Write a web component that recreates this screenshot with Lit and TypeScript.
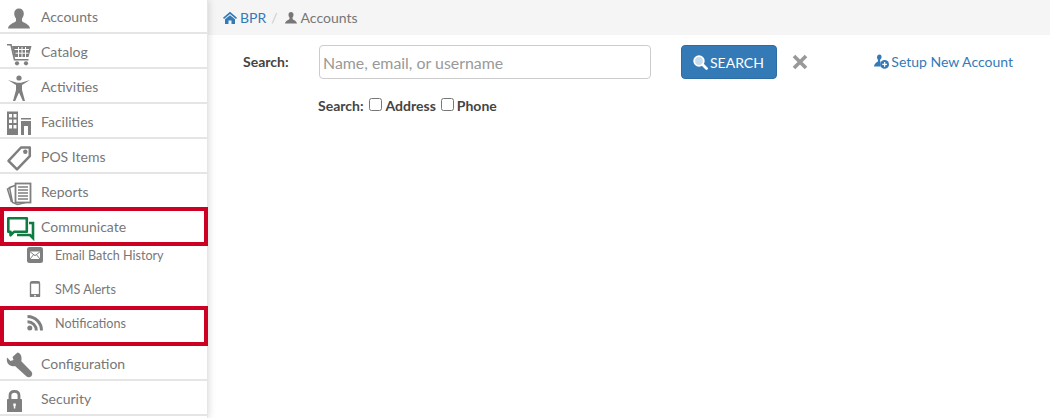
import { LitElement, html, css, svg } from "lit";
import { customElement } from "lit/decorators.js";

const G = "#7f7f7f";
const icons: Record<string, unknown> = {
  accounts: svg`<path fill="${G}" d="M15 7.500c-3 0-4.800 2-4.800 5 0 2 .8 3.700 1.800 5V20c-.5 1.700-7.500 2.500-8 7.500h22c-.5-5-7.500-5.800-8-7.500v-2.500c1-1.300 1.800-3 1.800-5 0-3-1.800-5-4.800-5z"/>`,
  catalog: svg`<path fill="none" stroke="${G}" stroke-width="1.600" d="M3 8.800h4l3.500 15h14"/><path fill="${G}" d="M8 10h19.500l-3 11H10.500z"/><path stroke="#fff" fill="none" d="M10.500 13.500h14.500M11.500 17.200h13M14.500 11v10M18 11v10M21.500 11v10"/><circle cx="13" cy="27.300" r="2.100" fill="${G}"/><circle cx="22" cy="27.300" r="2.100" fill="${G}"/>`,
  activities: svg`<circle cx="15" cy="7" r="2.600" fill="${G}"/><path fill="${G}" d="M4 9l9 2.800h4L26 9l-8 5v5l3 11h-2.200L15 21.500 11.200 30H9l3-11v-5z"/>`,
  facilities: svg`<path fill="${G}" fill-rule="evenodd" d="M3 5.500h11V29H3zM5 8v3.500h3V8zM9.500 8v3.500h3V8zM5 13.500V17h3v-3.500zM9.500 13.500V17h3v-3.500zM5 19v3.500h3V19zM9.500 19v3.500h3V19zM17 12h10v1.500H17zM17 15h10v14h-3v-9h-4v9h-3z"/>`,
  pos: svg`<path fill="none" stroke="${G}" stroke-width="2.500" stroke-linejoin="round" d="M17 6.500h8.800v8.600L13 28.300 4.500 19.800z"/><circle cx="21.300" cy="10.700" r="2.200" fill="${G}"/>`,
  reports: svg`<path fill="none" stroke="${G}" stroke-width="1.500" d="M11 9.500 5.500 11.500l3 15 5 2 8-2M8 10.500 3.500 13l4 13"/><rect x="11.500" y="7.500" width="15" height="19" fill="#fff" stroke="${G}" stroke-width="1.800"/><path stroke="${G}" stroke-width="1.500" d="M14 11h10M14 14h10M14 17h10M14 20h10M14 23h10"/>`,
  comm: svg`<path fill="none" stroke="#0e7c42" stroke-width="2.600" stroke-linejoin="round" d="M4.300 7.300h18.500v13.500H10l-3.500 3.500v-3.500H4.300z"/><path fill="none" stroke="#0e7c42" stroke-width="2.600" d="M25 12h4v12.500 2.500l-3-3H13"/>`,
  email: svg`<rect x="0" y="0" width="16" height="16" rx="2.500" fill="${G}"/><path fill="#fff" d="M3 4.500h10v7.500H3z"/><path fill="none" stroke="${G}" d="M3 4.700l5 4 5-4M3 12l3.700-4.500M13 12L9.300 7.500"/>`,
  sms: svg`<rect x="3.500" y=".7" width="9" height="15.600" rx="1.500" fill="#fff" stroke="${G}" stroke-width="1.400"/><rect x="3.500" y=".7" width="9" height="2" fill="${G}"/><rect x="3.500" y="13" width="9" height="3.300" fill="${G}"/><circle cx="8" cy="14.700" r=".9" fill="#fff"/>`,
  rss: svg`<circle cx="2.800" cy="13" r="2.500" fill="${G}"/><path fill="none" stroke="${G}" stroke-width="3" d="M.5 6.700a8.800 8.800 0 0 1 8.800 8.800M.5 1.500a14 14 0 0 1 14 14"/>`,
  config: svg`<path fill="${G}" d="M13.500 4.500 8.500 9l1 3-3 1-3.500-3.500c-1.200 5.500 2.800 9.800 8 8.500l11.300 10.300c1.500 1.400 3.700 1.300 5 0 1.300-1.400 1.300-3.500-.2-5L17.300 13.300C18.500 8 16 4.500 13.500 4.500z"/>`,
  security: svg`<path fill="none" stroke="${G}" stroke-width="2.800" d="M6 17v-4.500C6 9.800 7.800 8.400 10.500 8.400S15 9.800 15 12.500V17"/><path fill="${G}" fill-rule="evenodd" d="M4 16h13c.6 0 1 .4 1 1v12H3V17c0-.6.4-1 1-1zM9.300 20.500v2l.5 1v2h1.500v-2l.5-1v-2z"/>`,
};

type Item = { key: string; label: string };
const top: Item[] = [
  { key: "accounts", label: "Accounts" },
  { key: "catalog", label: "Catalog" },
  { key: "activities", label: "Activities" },
  { key: "facilities", label: "Facilities" },
  { key: "pos", label: "POS Items" },
  { key: "reports", label: "Reports" },
];
const subs: Item[] = [
  { key: "email", label: "Email Batch History" },
  { key: "sms", label: "SMS Alerts" },
  { key: "rss", label: "Notifications" },
];
const bottom: Item[] = [
  { key: "config", label: "Configuration" },
  { key: "security", label: "Security" },
];

@customElement("app-root")
export class AppRoot extends LitElement {
  static styles = css`
    :host {
      display: block;
      height: 418px;
      overflow: hidden;
      font-family: Lato, "Open Sans", sans-serif;
      font-size: 14px;
      color: #333;
      background: #fff;
    }
    .page { display: flex; height: 418px; }
    .side {
      position: relative;
      flex: 0 0 207px;
      height: 418px;
      background: #fff;
      border-right: 1px solid #e6e6e6;
      box-shadow: 1px 0 7px rgba(0, 0, 0, 0.14);
      z-index: 1;
    }
    .nav { margin-top: -1px; }
    .row {
      display: flex;
      align-items: center;
      box-sizing: border-box;
      height: 35px;
      padding: 2px 0 0 4px;
      gap: 5px;
      border-bottom: 2px solid #e5e5e5;
      color: #777;
      font-size: 14px;
    }
    .row.head { border-bottom: 0; height: 29px; padding-top: 6px; }
    .row svg { flex: none; width: 32px; height: 32px; }
    .subs { padding-bottom: 6px; }
    .sub {
      display: flex;
      align-items: center;
      height: 34px;
      padding-left: 27px;
      gap: 12px;
      color: #777;
      font-size: 12.600px;
    }
    .sub svg { flex: none; width: 16px; height: 16px; }
    .mark {
      position: absolute;
      left: 0;
      width: 208px;
      box-sizing: border-box;
      border: 4px solid #cc0022;
      pointer-events: none;
    }
    .mark.a { top: 207px; height: 39px; }
    .mark.b { top: 306px; height: 40px; }
    .main { flex: 1; min-width: 0; }
    .crumbs {
      display: flex;
      align-items: center;
      box-sizing: border-box;
      height: 35px;
      padding-left: 15px;
      background: #f5f5f5;
      color: #777;
      font-size: 14px;
    }
    .crumbs svg { width: 14px; height: 14px; flex: none; }
    .crumbs .bpr { color: #337ab7; margin-left: 3px; padding-bottom: 1px; }
    .crumbs .sep { color: #ccc; margin: 0 6px 0 5px; padding-bottom: 1px; }
    .crumbs .cur { margin-left: 3px; padding-bottom: 1px; }
    .form { padding: 10px 37px 0 35px; }
    .line { display: flex; align-items: center; height: 34px; }
    .lbl { width: 76px; font-weight: 700; color: #444; padding-bottom: 2px; font-size: 14px; }
    .input {
      box-sizing: border-box;
      width: 332px;
      height: 34px;
      padding: 0 3px;
      font: 15.900px Lato, sans-serif;
      border: 1px solid #ccc;
      border-radius: 4px;
      color: #333;
      outline: none;
    }
    .input::placeholder { color: #999; opacity: 1; }
    .btn {
      display: flex;
      align-items: center;
      gap: 2px;
      box-sizing: border-box;
      width: 96px;
      height: 34px;
      margin-left: 30px;
      padding: 0 0 0 11px;
      background: #337ab7;
      border: 1px solid #2e6da4;
      border-radius: 4px;
      color: #fff;
      font: 14px Lato, sans-serif;
    }
    .btn svg { width: 15px; height: 15px; flex: none; }
    .clear { width: 16px; height: 16px; margin-left: 15px; flex: none; }
    .link {
      display: flex;
      align-items: center;
      gap: 2px;
      margin-left: auto;
      color: #337ab7;
      font-size: 14px;
      padding-bottom: 2px;
    }
    .link svg { width: 15px; height: 15px; flex: none; }
    .opts {
      display: flex;
      align-items: center;
      margin: 16px 0 0 75px;
      font-weight: 700;
      color: #444;
      font-size: 14px;
      height: 20px;
    }
    .opts label { display: flex; align-items: center; }
    .opts input { width: 13px; height: 13px; margin: 0 3px 2px 5px; }
    .opts label:first-of-type input { margin-right: 4px; }
  `;

  private row(i: Item, cls = "") {
    return html`<div class="row ${cls}"><svg viewBox="0 0 32 32">${icons[i.key]}</svg><span>${i.label}</span></div>`;
  }

  render() {
    return html`<div class="page">
      <aside class="side">
        <nav class="nav">
          ${top.map((i) => this.row(i))}
          ${this.row({ key: "comm", label: "Communicate" }, "head")}
          <div class="subs">
            ${subs.map(
              (i) => html`<div class="sub"><svg viewBox="0 0 16 16">${icons[i.key]}</svg><span>${i.label}</span></div>`
            )}
          </div>
          ${bottom.map((i) => this.row(i))}
        </nav>
        <div class="mark a"></div>
        <div class="mark b"></div>
      </aside>
      <main class="main">
        <div class="crumbs">
          <svg viewBox="0 0 14 14"><path fill="#337ab7" d="M7 .8 0 6.800l1 1.100L7 3l6 4.900 1-1.100zM2 8.200 7 4.200l5 4V13H8.500V9.500h-3V13H2z"/></svg>
          <span class="bpr">BPR</span><span class="sep">/</span>
          <svg viewBox="0 0 14 14"><path fill="#777" d="M7 1C5.500 1 4.500 2 4.500 3.800c0 1.200.5 2.200 1 2.800V8C5 9 1.500 9.500 1 12.500h12C12.500 9.500 9 9 8.500 8V6.600c.5-.6 1-1.600 1-2.800C9.500 2 8.500 1 7 1z"/></svg>
          <span class="cur">Accounts</span>
        </div>
        <div class="form">
          <div class="line">
            <span class="lbl">Search:</span>
            <input class="input" placeholder="Name, email, or username" />
            <button class="btn">
              <svg viewBox="0 0 15 15"><circle cx="6" cy="6" r="4.800" fill="#c9dcec" stroke="#fff" stroke-width="1.800"/><path stroke="#fff" stroke-width="2.800" stroke-linecap="round" d="M9.800 9.800l3.700 3.700"/></svg>
              SEARCH
            </button>
            <svg class="clear" viewBox="0 0 16 16"><path stroke="#999" stroke-width="3.600" d="M2 2l12 12M14 2 2 14"/></svg>
            <span class="link">
              <svg viewBox="0 0 15 15"><path fill="#337ab7" d="M5.500 .5C4 .5 3 1.600 3 3.300c0 1.100.5 2 1 2.600v1.400C3.500 8.300.5 8.700 0 12.500h6.500V8c-.2-.2-.3-.5-.4-.7V5.900c.5-.6 1.500-1.500 1.500-2.600C7.600 1.600 7 .5 5.500 .5z"/><circle cx="10.600" cy="10.400" r="4.400" fill="#337ab7"/><path stroke="#fff" stroke-width="1.300" d="M8.300 10.400h4.600M10.600 8.100v4.600"/></svg>
              Setup New Account
            </span>
          </div>
          <div class="opts">
            <span>Search:</span>
            <label><input type="checkbox" />Address</label>
            <label><input type="checkbox" />Phone</label>
          </div>
        </div>
      </main>
    </div>`;
  }
}
